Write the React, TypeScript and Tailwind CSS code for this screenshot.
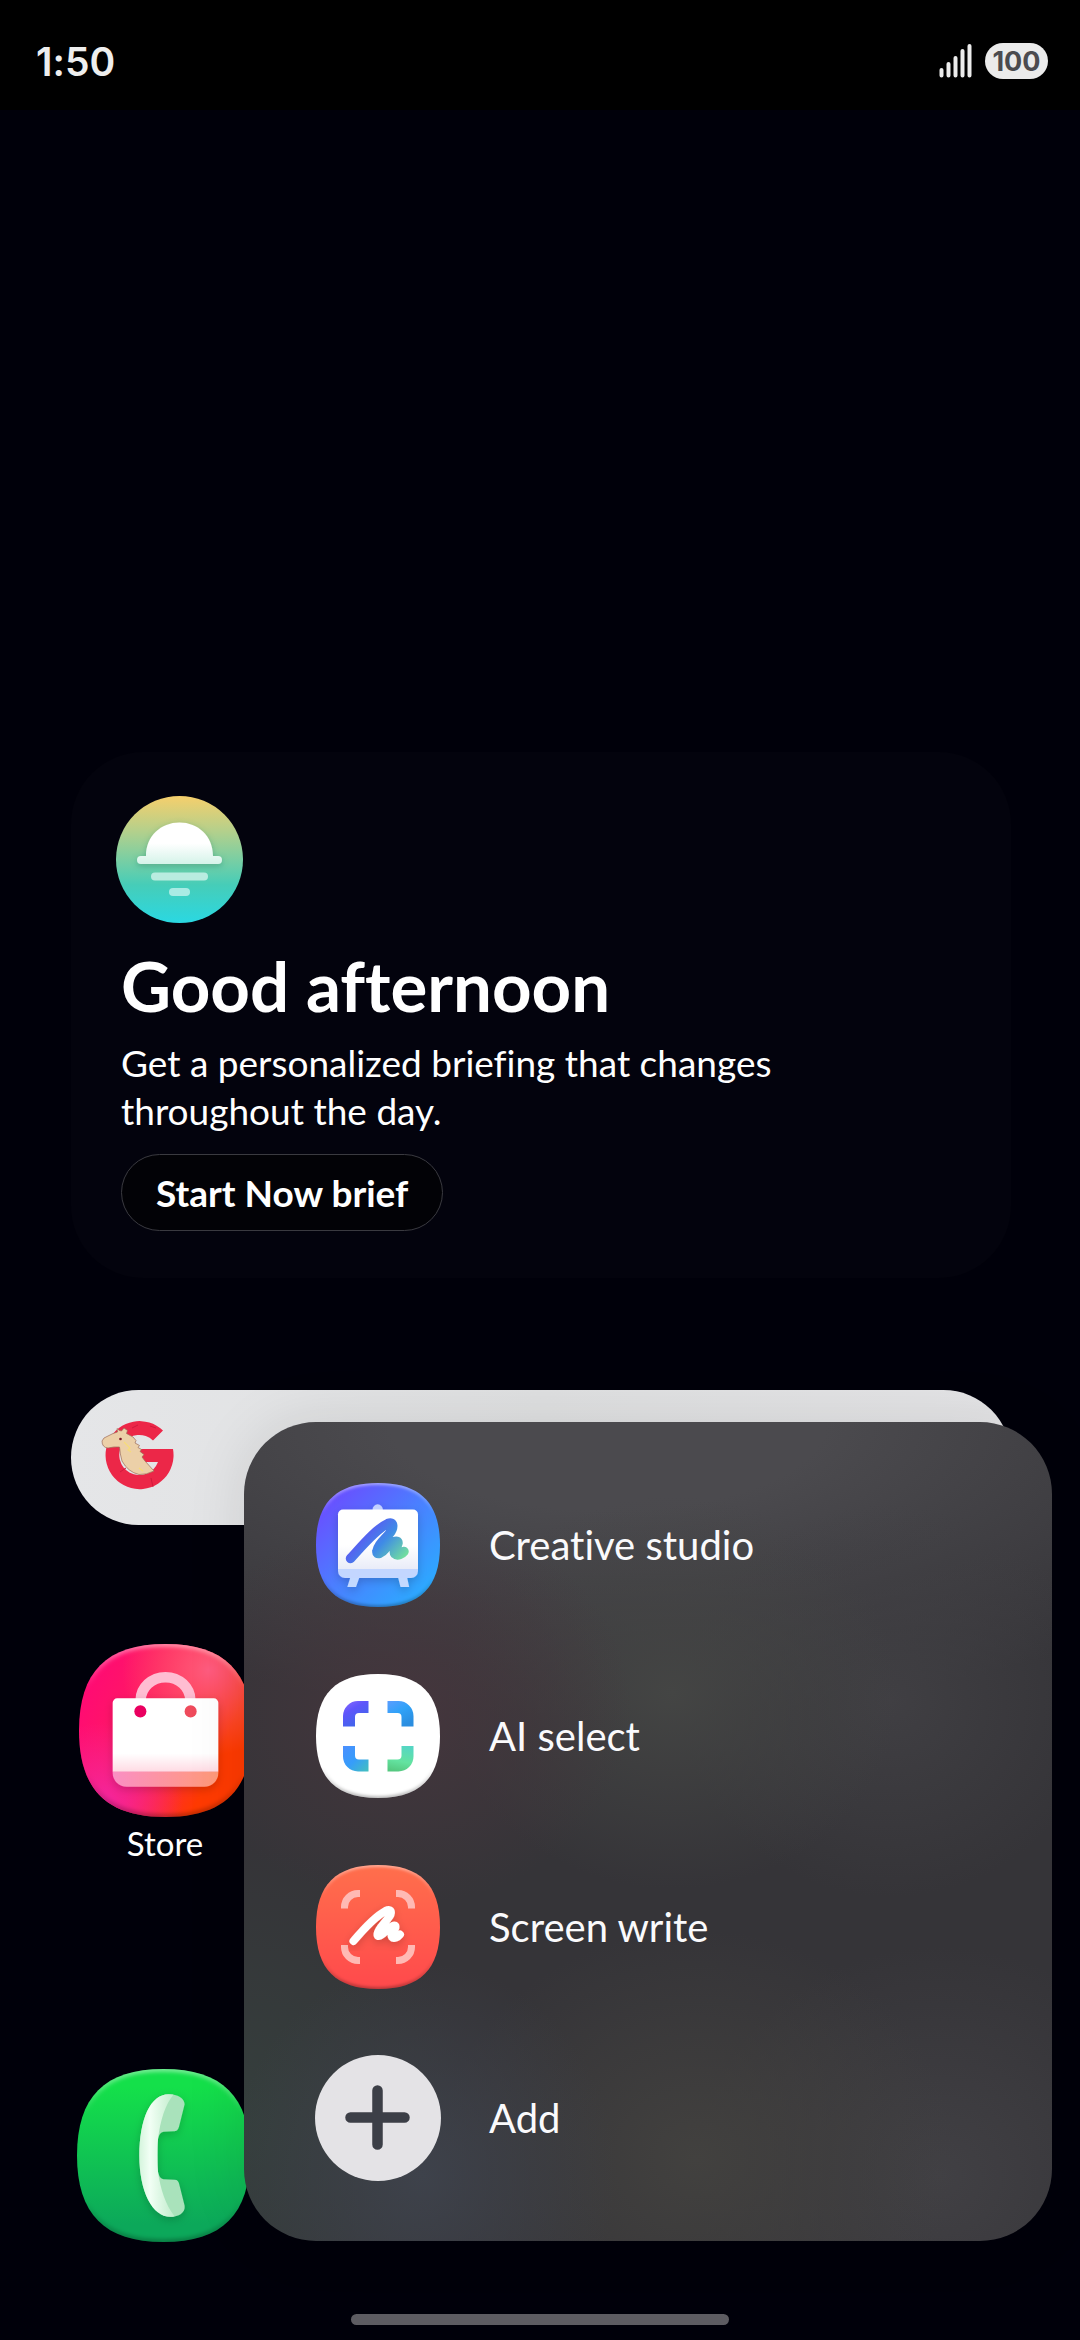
import type { ReactNode } from "react";

const SQUIRCLE =
  "M50 0C84 0 100 16 100 50C100 84 84 100 50 100C16 100 0 84 0 50C0 16 16 0 50 0Z";

const textFont = "font-['Lato','Inter',sans-serif] [font-variant-ligatures:none]";

type TileProps = {
  id: string;
  size: number;
  className: string;
  fill: ReactNode;
  children?: ReactNode;
};

function Tile({ id, size, className, fill, children }: TileProps) {
  const scale = `scale(${size / 100})`;
  return (
    <svg viewBox={`0 0 ${size} ${size}`} className={className} aria-hidden="true">
      <defs>
        <clipPath id={`${id}-clip`}>
          <path d={SQUIRCLE} transform={scale} />
        </clipPath>
        <linearGradient id={`${id}-rim`} x1="0" y1="0" x2="0" y2="1">
          <stop offset="0" stopColor="#fff" stopOpacity="0.5" />
          <stop offset="0.25" stopColor="#fff" stopOpacity="0" />
          <stop offset="0.75" stopColor="#000" stopOpacity="0" />
          <stop offset="1" stopColor="#000" stopOpacity="0.3" />
        </linearGradient>
        <filter id={`${id}-soft`}>
          <feGaussianBlur stdDeviation="1.2" />
        </filter>
        <filter id={`${id}-shade`} x="-30%" y="-30%" width="160%" height="160%">
          <feDropShadow dx="0" dy="3" stdDeviation="4" floodColor="#000" floodOpacity="0.18" />
        </filter>
      </defs>
      <g clipPath={`url(#${id}-clip)`}>
        {fill}
        <path
          d={SQUIRCLE}
          transform={scale}
          fill="none"
          stroke={`url(#${id}-rim)`}
          strokeWidth="3"
          filter={`url(#${id}-soft)`}
        />
      </g>
      {children}
    </svg>
  );
}

function CreativeStudioIcon() {
  return (
    <Tile
      id="studio"
      size={124}
      className="size-[124px]"
      fill={
        <>
          <linearGradient id="studio-bg" x1="0.1" y1="0.1" x2="0.9" y2="0.9">
            <stop offset="0" stopColor="#6a4dff" />
            <stop offset="0.5" stopColor="#4a80ff" />
            <stop offset="1" stopColor="#2aacff" />
          </linearGradient>
          <linearGradient id="studio-board" x1="0" y1="0" x2="0" y2="1">
            <stop offset="0.6" stopColor="#fff" />
            <stop offset="1" stopColor="#e9ecf8" />
          </linearGradient>
          <linearGradient id="studio-ink" gradientUnits="userSpaceOnUse" x1="50" y1="40" x2="88" y2="74">
            <stop offset="0" stopColor="#5f50f5" />
            <stop offset="0.5" stopColor="#3f8be6" />
            <stop offset="1" stopColor="#70dda0" />
          </linearGradient>
          <rect width="124" height="124" fill="url(#studio-bg)" />
        </>
      }
    >
      <g filter="url(#studio-shade)">
        <path d="M56.5 27a5.2 5.8 0 0 1 10.4 0Z" fill="#c3d0ff" />
        <path d="M34.5 94h9l-3.5 10h-8.7ZM82 94h9l2.2 10h-8.7Z" fill="#c3d9ff" />
        <path d="M22 85h80v3a7 7 0 0 1-7 7H29a7 7 0 0 1-7-7Z" fill="#c3d6ff" />
        <path d="M22 86V31.5a5 5 0 0 1 5-5H97a5 5 0 0 1 5 5V86Z" fill="url(#studio-board)" />
      </g>
      <path
        d="M34.5 75.5C46 63 60 46 72 40.5C78 38 78 45 73.5 50.5C67 58 62 62 61 68C60 73 66 70 70 65C75 59 82 56 82 60C81 65 76.500 68 79 71C81.500 73.500 86 71 88 68.500"
        fill="none"
        stroke="url(#studio-ink)"
        strokeWidth="9.5"
        strokeLinecap="round"
        strokeLinejoin="round"
      />
    </Tile>
  );
}

function AiSelectIcon() {
  return (
    <Tile
      id="select"
      size={124}
      className="size-[124px]"
      fill={
        <>
          <linearGradient id="select-a" x1="0" y1="0" x2="0.6" y2="1">
            <stop offset="0" stopColor="#8a6cff" />
            <stop offset="0.4" stopColor="#5f55fb" />
            <stop offset="1" stopColor="#3d68e8" />
          </linearGradient>
          <linearGradient id="select-b" x1="0" y1="0" x2="0.6" y2="1">
            <stop offset="0" stopColor="#5c9dff" />
            <stop offset="0.5" stopColor="#2fa2f8" />
            <stop offset="1" stopColor="#2b8ee0" />
          </linearGradient>
          <linearGradient id="select-c" x1="0" y1="0" x2="1" y2="1">
            <stop offset="0" stopColor="#4c8fff" />
            <stop offset="0.5" stopColor="#369dfa" />
            <stop offset="1" stopColor="#43c0bd" />
          </linearGradient>
          <linearGradient id="select-d" x1="0.6" y1="0" x2="0.4" y2="1">
            <stop offset="0" stopColor="#55d6c4" />
            <stop offset="0.6" stopColor="#63e3a0" />
            <stop offset="1" stopColor="#55c880" />
          </linearGradient>
          <rect width="124" height="124" fill="#fff" />
        </>
      }
    >
      <path d="M27 52.5V42A15 15 0 0 1 42 27H52.5V39H43Q39 39 39 43V52.5Z" fill="url(#select-a)" />
      <path d="M97.5 52.5V42A15 15 0 0 0 82.5 27H71.5V39H81.5Q85.5 39 85.5 43V52.5Z" fill="url(#select-b)" />
      <path d="M27 72V82.5A15 15 0 0 0 42 97.5H52.5V85.5H43Q39 85.5 39 81.5V72Z" fill="url(#select-c)" />
      <path d="M97.5 72V82.5A15 15 0 0 1 82.5 97.5H71.5V85.5H81.5Q85.5 85.5 85.5 81.5V72Z" fill="url(#select-d)" />
    </Tile>
  );
}

function ScreenWriteIcon() {
  return (
    <Tile
      id="write"
      size={124}
      className="size-[124px]"
      fill={
        <>
          <linearGradient id="write-bg" x1="0" y1="0" x2="0" y2="1">
            <stop offset="0" stopColor="#ff6f4c" />
            <stop offset="1" stopColor="#ff494c" />
          </linearGradient>
          <rect width="124" height="124" fill="url(#write-bg)" />
        </>
      }
    >
      <path
        d="M28.5 43.5V42A13.5 13.5 0 0 1 42 28.5H44M95.5 43.5V42A13.5 13.5 0 0 0 82 28.5H80M28.5 80V82A13.5 13.5 0 0 0 42 95.5H44M95.5 80V82A13.5 13.5 0 0 1 82 95.5H80"
        fill="none"
        stroke="#ffb9b4"
        strokeWidth="7"
      />
      <path
        d="M37.5 76C46 66 58 52 69.500 46C76 43 76.500 48 72 53.500C67 60 62 64 61.500 69C61 73.500 66 70 70 66C75 61 80 58.500 79.500 62.500C78 67 74 69 76 72C78 74.500 82 72 84 69.500"
        fill="none"
        stroke="#fff"
        strokeWidth="8"
        strokeLinecap="round"
        strokeLinejoin="round"
        filter="url(#write-shade)"
      />
    </Tile>
  );
}

function AddIcon() {
  return (
    <svg viewBox="0 0 126 126" className="size-[126px]" aria-hidden="true">
      <circle cx="63" cy="63" r="63" fill="#e4e3e6" />
      <path d="M62.5 35.5V89.5M35.5 62.5H89.5" stroke="#3c3f47" strokeWidth="10.5" strokeLinecap="round" />
    </svg>
  );
}

function StoreIcon() {
  return (
    <Tile
      id="store"
      size={172}
      className="size-[173px]"
      fill={
        <>
          <linearGradient id="store-bg" x1="0" y1="0.3" x2="1" y2="0.75">
            <stop offset="0" stopColor="#ff0a74" />
            <stop offset="0.45" stopColor="#ff1f5c" />
            <stop offset="0.8" stopColor="#ff3a00" />
          </linearGradient>
          <radialGradient id="store-glow" cx="0.75" cy="0.15" r="0.5">
            <stop offset="0" stopColor="#ff5c80" />
            <stop offset="1" stopColor="#ff5c60" stopOpacity="0" />
          </radialGradient>
          <radialGradient id="store-pink" cx="0.15" cy="0.9" r="0.45">
            <stop offset="0" stopColor="#f4259c" />
            <stop offset="1" stopColor="#f4259c" stopOpacity="0" />
          </radialGradient>
          <linearGradient id="store-hem" x1="0" y1="0" x2="1" y2="0">
            <stop offset="0" stopColor="#fa8fc4" />
            <stop offset="1" stopColor="#ff9a78" />
          </linearGradient>
          <linearGradient id="store-bag" x1="0" y1="0" x2="0" y2="1">
            <stop offset="0.75" stopColor="#fff" />
            <stop offset="1" stopColor="#ffdbe4" />
          </linearGradient>
          <rect width="172" height="172" fill="url(#store-bg)" />
          <rect width="172" height="172" fill="url(#store-glow)" />
          <rect width="172" height="172" fill="url(#store-pink)" />
        </>
      }
    >
      <path d="M61.3 56A24.7 23 0 0 1 110.7 56" fill="none" stroke="#ffbdd2" strokeWidth="10.5" />
      <g filter="url(#store-shade)">
        <path d="M33.5 127H138.5V128A14 14 0 0 1 124.5 142H47.5A14 14 0 0 1 33.5 128Z" fill="url(#store-hem)" />
        <path d="M33.5 127V58.5A4.5 4.5 0 0 1 38 54H134A4.5 4.5 0 0 1 138.5 58.5V127Z" fill="url(#store-bag)" />
      </g>
      <circle cx="61" cy="67" r="6" fill="#ea0060" />
      <circle cx="111" cy="67" r="6" fill="#ef4b5c" />
    </Tile>
  );
}

function PhoneIcon() {
  return (
    <Tile
      id="phone"
      size={172}
      className="size-[173px]"
      fill={
        <>
          <linearGradient id="phone-bg" x1="0" y1="0" x2="0" y2="1">
            <stop offset="0.1" stopColor="#14e04a" />
            <stop offset="0.9" stopColor="#0ca85a" />
          </linearGradient>
          <linearGradient id="phone-body" x1="0" y1="0" x2="1" y2="0">
            <stop offset="0" stopColor="#d5f5dd" />
            <stop offset="0.3" stopColor="#f2fff5" />
            <stop offset="1" stopColor="#bfeccb" />
          </linearGradient>
          <rect width="172" height="172" fill="url(#phone-bg)" />
        </>
      }
    >
      <g filter="url(#phone-shade)">
        <path
          d="M91 25C100 25 107 29 107 35L101.5 57C100.5 61 99 62 96 62L86 62.5C82 63 80 68 80 76V96C80 104 82 109 86 109.5L97 110C100 110 101 112 101.5 114L107 136C108 143 101 147 93 147C75 147 62 122 62 86C62 50 73 25 91 25Z"
          fill="#a9e2bb"
        />
        <path
          d="M96 25.3C88 35 83 50 80.5 70Q80 76 80 86Q80 96 80.5 102C83 120 88 135 97 146.5Q95 147 93 147C75 147 62 122 62 86C62 50 73 25 91 25Q94 25 96 25.3Z"
          fill="url(#phone-body)"
        />
      </g>
    </Tile>
  );
}

function BriefIcon() {
  return (
    <svg viewBox="0 0 127 127" className="size-[127px]" aria-hidden="true">
      <defs>
        <linearGradient id="brief-bg" x1="0" y1="0" x2="0" y2="1">
          <stop offset="0" stopColor="#f6cf6c" />
          <stop offset="0.28" stopColor="#b3d08c" />
          <stop offset="0.7" stopColor="#46cdb8" />
          <stop offset="1" stopColor="#2ad8e2" />
        </linearGradient>
        <linearGradient id="brief-sun" x1="0" y1="0" x2="0" y2="1">
          <stop offset="0.5" stopColor="#fff" />
          <stop offset="1" stopColor="#d5f3e9" />
        </linearGradient>
        <filter id="brief-shade" x="-20%" y="-20%" width="140%" height="150%">
          <feDropShadow dx="0" dy="2" stdDeviation="3" floodColor="#1c6a5c" floodOpacity="0.35" />
        </filter>
      </defs>
      <circle cx="63.5" cy="63.5" r="63.5" fill="url(#brief-bg)" />
      <path
        d="M30 60C30 40 45 26.5 63.5 26.5S97 40 97 60H102a4 4 0 0 1 0 8H25a4 4 0 0 1 0-8Z"
        fill="url(#brief-sun)"
        filter="url(#brief-shade)"
      />
      <rect x="35" y="76.5" width="57" height="8" rx="4" fill="#b9ece0" />
      <rect x="53" y="92" width="21" height="8" rx="4" fill="#a9ebe4" />
    </svg>
  );
}

function SearchLogo() {
  return (
    <svg viewBox="0 0 100 100" className="size-[100px]" aria-hidden="true">
      <path d="M73 24.5A34 34 0 1 0 83 43H50V56H68A20 20 0 1 1 63 34.5Z" fill="#ec2748" />
      <path
        d="M61 72L63 81M30 66L36 62M66 22L60 20M42 22L48 19"
        stroke="#d01a3c"
        strokeWidth="1"
        fill="none"
      />
      <path
        d="M12 35L14 32L23 27.5L27.5 26L27 22.5L29.5 24.5L31.5 25L34 22L37.5 24.5L36.5 27.5L43 31L46 34.5L45 37L49.5 39.5L48 41.5L51.5 43.5L50 45.5L54 48.5L52 51L55 55L64 65Q56 69 49 68.5Q38 66 32 55Q30 48 29.5 41Q24 40.5 18 42Q12 41.5 12 35Z"
        fill="#ecd0a8"
        stroke="#9c6a58"
        strokeWidth="0.7"
      />
      <path d="M34 36L40 42L38 44L41 46M49 62L53 65" fill="none" stroke="#f6dc78" strokeWidth="1.2" />
      <circle cx="30.5" cy="33" r="1.3" fill="#7a1626" />
    </svg>
  );
}

function StatusBar() {
  return (
    <header className="flex h-[110px] items-center justify-between bg-black pt-3 pr-8 pl-9 font-['Inter',sans-serif]">
      <time className="text-[39px] leading-none font-semibold text-[#eeeeee]">1:50</time>
      <div className="flex items-center gap-3">
        <svg viewBox="0 0 34 34" className="size-[34px]" role="img" aria-label="Signal">
          <path
            d="M2.5 26V31.5M9.5 20V31.5M16.5 14V31.5M23.5 7V31.5M30.5 2V31.5"
            stroke="#ececec"
            strokeWidth="4"
            strokeLinecap="round"
          />
        </svg>
        <span className="flex h-9 w-[63px] items-center justify-center rounded-full bg-[#ebebeb] text-[27px] leading-none font-bold text-[#4b4b4f]">
          100
        </span>
      </div>
    </header>
  );
}

const shortcuts = [
  { label: "Creative studio", icon: <CreativeStudioIcon /> },
  { label: "AI select", icon: <AiSelectIcon /> },
  { label: "Screen write", icon: <ScreenWriteIcon /> },
  { label: "Add", icon: <AddIcon /> },
];

function ShortcutMenu() {
  return (
    <nav className="absolute right-7 bottom-[99px] left-[244px] rounded-[72px] bg-[#353438] bg-[radial-gradient(ellipse_28%_24%_at_20%_35%,#45363d,transparent),radial-gradient(ellipse_28%_24%_at_53%_33%,#444544,transparent),radial-gradient(ellipse_26%_24%_at_80%_34%,#403f43,transparent),radial-gradient(ellipse_24%_26%_at_22%_92%,#3e424b,transparent),radial-gradient(ellipse_28%_34%_at_0%_86%,#353f3d,transparent),radial-gradient(ellipse_32%_28%_at_56%_90%,#42413f,transparent),radial-gradient(ellipse_30%_28%_at_86%_92%,#414044,transparent),radial-gradient(ellipse_90%_36%_at_45%_0%,#4b4a4e_30%,transparent)] px-[71px] py-[60px] shadow-[0_0_60px_rgba(0,0,0,0.1)]">
      <ul className="flex flex-col gap-[65px]">
        {shortcuts.map(({ label, icon }) => (
          <li key={label}>
            <button type="button" className="flex w-full items-center gap-12 text-left text-[40px] text-[#fafafc]">
              <span className="flex size-[126px] items-center justify-center">{icon}</span>
              {label}
            </button>
          </li>
        ))}
      </ul>
    </nav>
  );
}

export default function App() {
  return (
    <div className={`relative flex min-h-screen flex-col bg-[#00000a] text-white ${textFont}`}>
      <StatusBar />

      <main className="flex flex-1 flex-col pt-[642px]">
        <section className="mr-[69px] ml-[71px] rounded-[72px] bg-[#03030d] px-[45px] pt-11 pb-[47px]">
          <BriefIcon />
          <div className="mt-[27px] pl-[5px]">
            <h1 className="text-[69px] leading-[72px] font-bold">Good afternoon</h1>
            <p className="mt-[17px] max-w-[700px] text-[37px] leading-[48px]">
              Get a personalized briefing that changes throughout the day.
            </p>
            <button
              type="button"
              className="mt-[19px] flex h-[77px] items-center rounded-full border border-[#3a3a40] bg-[#020206] px-[34px] text-[37px] leading-none font-bold"
            >
              Start Now brief
            </button>
          </div>
        </section>

        <button
          type="button"
          aria-label="Search"
          className="mr-[69px] ml-[71px] mt-28 flex h-[135px] items-center rounded-full bg-linear-to-r from-[#e5e6e8] via-[#dfe0e1] to-[#e4e4e6] pb-1 pl-[19px]"
        >
          <SearchLogo />
        </button>

        <div className="mt-[119px] grid grid-cols-4 px-10">
          <a href="#store" className="flex flex-col items-center gap-1.5 text-[33px] leading-10">
            <StoreIcon />
            Store
          </a>
        </div>

        <div className="mt-auto grid grid-cols-4 px-[38px]">
          <a href="#phone" aria-label="Phone" className="flex justify-center">
            <PhoneIcon />
          </a>
        </div>
      </main>

      <footer className="flex justify-center pt-[72px] pb-[15px]">
        <div className="h-[11px] w-[35%] rounded-full bg-[#5d5c62]" />
      </footer>

      <ShortcutMenu />
    </div>
  );
}
